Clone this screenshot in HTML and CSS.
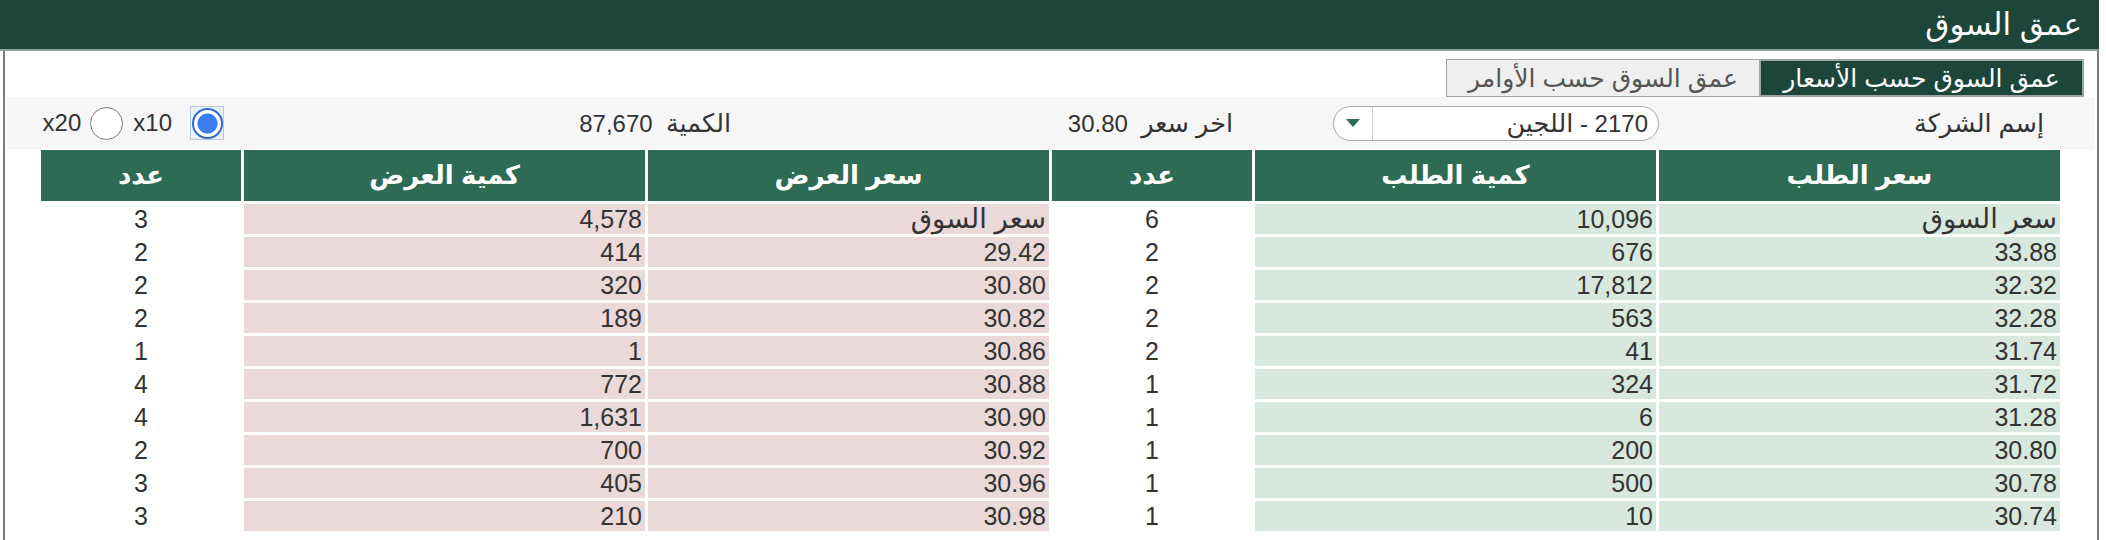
FILE: index.html
```html
<!DOCTYPE html>
<html lang="ar" dir="rtl">
<head>
<meta charset="utf-8">
<title>عمق السوق</title>
<link rel="stylesheet" href="styles.css">
</head>
<body>
<div class="app">
  <header class="titlebar"><h1 class="title">عمق السوق</h1></header>
  <div class="panel">
    <div class="tabs">
      <div class="tab tab-active">عمق السوق حسب الأسعار</div>
      <div class="tab">عمق السوق حسب الأوامر</div>
    </div>
    <div class="controls">
      <div class="ctl-label"><span class="ar">إسم الشركة</span></div>
      <div class="select">
        <span class="select-value">2170 - <span class="ar">اللجين</span></span>
        <span class="select-btn"><span class="caret"></span></span>
      </div>
      <div class="ctl-last"><span class="ar">اخر سعر</span>&nbsp; 30.80</div>
      <div class="ctl-qty"><span class="ar">الكمية</span>&nbsp; 87,670</div>
      <div class="radios">
        <span class="radio-focus"><span class="radio radio-on"></span></span>
        <span class="radio-text">x10</span>
        <span class="radio"></span>
        <span class="radio-text radio-text-last">x20</span>
      </div>
    </div>
    <div class="book">
      <div class="th">سعر الطلب</div>
      <div class="th">كمية الطلب</div>
      <div class="th">عدد</div>
      <div class="th">سعر العرض</div>
      <div class="th">كمية العرض</div>
      <div class="th">عدد</div>

      <div class="td bid ar-cell">سعر السوق</div><div class="td bid">10,096</div><div class="td cnt">6</div><div class="td ask ar-cell">سعر السوق</div><div class="td ask">4,578</div><div class="td cnt">3</div>
      <div class="td bid">33.88</div><div class="td bid">676</div><div class="td cnt">2</div><div class="td ask">29.42</div><div class="td ask">414</div><div class="td cnt">2</div>
      <div class="td bid">32.32</div><div class="td bid">17,812</div><div class="td cnt">2</div><div class="td ask">30.80</div><div class="td ask">320</div><div class="td cnt">2</div>
      <div class="td bid">32.28</div><div class="td bid">563</div><div class="td cnt">2</div><div class="td ask">30.82</div><div class="td ask">189</div><div class="td cnt">2</div>
      <div class="td bid">31.74</div><div class="td bid">41</div><div class="td cnt">2</div><div class="td ask">30.86</div><div class="td ask">1</div><div class="td cnt">1</div>
      <div class="td bid">31.72</div><div class="td bid">324</div><div class="td cnt">1</div><div class="td ask">30.88</div><div class="td ask">772</div><div class="td cnt">4</div>
      <div class="td bid">31.28</div><div class="td bid">6</div><div class="td cnt">1</div><div class="td ask">30.90</div><div class="td ask">1,631</div><div class="td cnt">4</div>
      <div class="td bid">30.80</div><div class="td bid">200</div><div class="td cnt">1</div><div class="td ask">30.92</div><div class="td ask">700</div><div class="td cnt">2</div>
      <div class="td bid">30.78</div><div class="td bid">500</div><div class="td cnt">1</div><div class="td ask">30.96</div><div class="td ask">405</div><div class="td cnt">3</div>
      <div class="td bid">30.74</div><div class="td bid">10</div><div class="td cnt">1</div><div class="td ask">30.98</div><div class="td ask">210</div><div class="td cnt">3</div>
    </div>
  </div>
</div>
</body>
</html>
```

FILE: styles.css
```css
* { box-sizing: border-box; }
html, body { margin: 0; padding: 0; background: #ffffff; }
body {
  font-family: "Liberation Sans", "DejaVu Sans", sans-serif;
  color: #333333;
  width: 2106px;
  height: 540px;
  overflow: hidden;
}
.app { width: 2099px; margin-right: auto; margin-left: 0; }
.titlebar {
  height: 51px;
  background: #1c463a;
  border-bottom: 2px solid #8c9f98;
  display: flex;
  align-items: center;
  padding-right: 17px;
}
.title {
  margin: 0;
  font-size: 31px;
  font-weight: normal;
  color: #ffffff;
  line-height: 1;
}
.panel {
  margin-left: 3px;
  border-left: 2px solid #7d7d7d;
  border-right: 2px solid #7d7d7d;
  height: 489px;
  padding-top: 8px;
}
.tabs {
  display: flex;
  height: 38px;
  padding-right: 13px;
}
.tab {
  height: 38px;
  display: flex;
  align-items: center;
  justify-content: center;
  font-size: 25px;
  white-space: nowrap;
}
.tab-active {
  width: 325px;
  background: #1c463a;
  color: #ffffff;
  border: 2px solid #9aa6a2;
}
.tab:not(.tab-active) {
  width: 313px;
  background: #efefef;
  color: #555555;
  border: 1px solid #a4a4a4;
  border-right: none;
}
.controls {
  margin: 0 2px;
  height: 52px;
  background: #f6f6f6;
  display: flex;
  align-items: center;
  padding-right: 51px;
  font-size: 24px;
  white-space: nowrap;
}
.ar { font-size: 25.5px; }
.ctl-label { width: 385px; }
.select {
  width: 326px;
  height: 35px;
  border: 1.5px solid #a9a9a9;
  border-radius: 18px;
  background: #ffffff;
  display: flex;
  align-items: center;
  overflow: hidden;
}
.select-value {
  flex: 1;
  padding-right: 10px;
  font-size: 24px;
}
.select-btn {
  width: 39px;
  height: 100%;
  border-right: 1px solid #cfcfcf;
  display: flex;
  align-items: center;
  justify-content: center;
}
.caret {
  width: 0;
  height: 0;
  border-left: 7px solid transparent;
  border-right: 7px solid transparent;
  border-top: 8px solid #2e6b55;
}
.ctl-last { width: 502px; margin-right: 100px; }
.ctl-qty { width: 507px; }
.radios {
  display: flex;
  align-items: center;
}
.radio-focus {
  width: 34px;
  height: 34px;
  border: 1px solid #b9c7dc;
  background: #e9f0fa;
  display: flex;
  align-items: center;
  justify-content: center;
}
.radio {
  width: 33px;
  height: 33px;
  border-radius: 50%;
  border: 1.5px solid #7a7a7a;
  background: #ffffff;
}
.radio-focus .radio {
  width: 31px;
  height: 31px;
  border: 2.5px solid #3267d4;
  background: radial-gradient(circle, #3b7cf3 0 9.5px, #ffffff 10.5px);
}
.radio-text { margin: 0 18px 0 10px; }
.radio-text-last { margin: 0 9px 0 0; }
.book {
  margin: 1px 37px 0 36px;
  display: grid;
  grid-template-columns: 401px 401px 200px 401px 401px 200px;
  grid-template-rows: 51px;
  grid-auto-rows: 30px;
  column-gap: 3px;
  row-gap: 3px;
}
.th {
  background: #2e6b55;
  color: #ffffff;
  font-weight: bold;
  font-size: 26px;
  display: flex;
  align-items: center;
  justify-content: center;
}
.td {
  font-size: 25px;
  display: flex;
  align-items: center;
  padding-right: 3px;
  line-height: 1;
  white-space: nowrap;
}
.ar-cell { font-size: 27.5px; }
.bid { background: #d7e8df; }
.ask { background: #ebd8d9; }
.cnt { justify-content: center; padding-right: 0; }
```
